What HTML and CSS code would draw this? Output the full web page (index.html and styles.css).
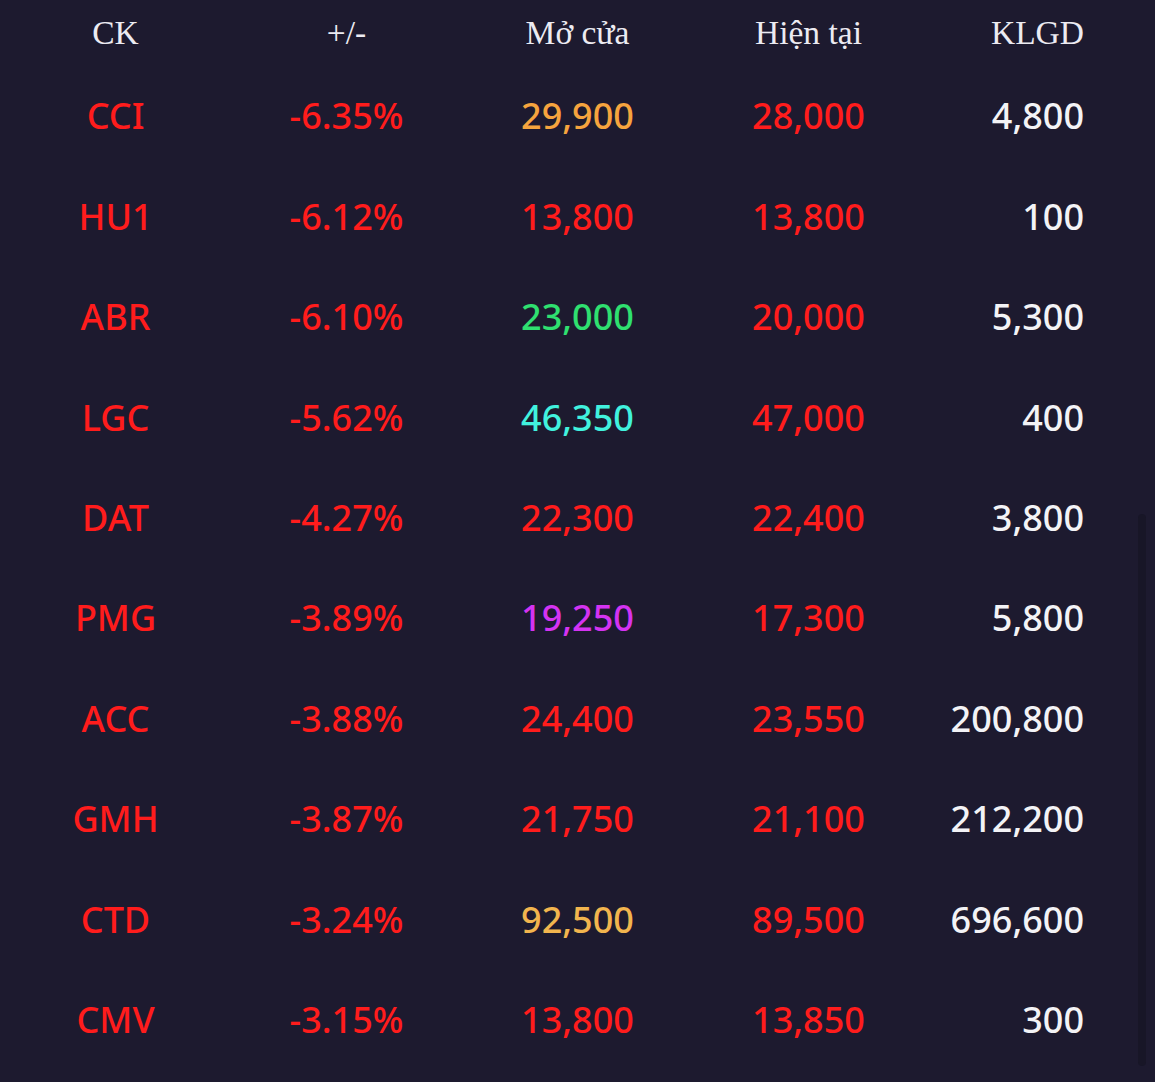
FILE: index.html
```html
<!DOCTYPE html>
<html lang="vi">
<head>
<meta charset="utf-8">
<title>Bảng giá</title>
<link rel="stylesheet" href="styles.css">
</head>
<body>
<div class="board">
  <div class="row head">
    <div class="cell">CK</div>
    <div class="cell">+/-</div>
    <div class="cell">Mở cửa</div>
    <div class="cell">Hiện tại</div>
    <div class="cell vol">KLGD</div>
  </div>
  <div class="row">
    <div class="cell red">CCI</div><div class="cell red">-6.35%</div><div class="cell ref">29,900</div><div class="cell red">28,000</div><div class="cell vol white">4,800</div>
  </div>
  <div class="row">
    <div class="cell red">HU1</div><div class="cell red">-6.12%</div><div class="cell red">13,800</div><div class="cell red">13,800</div><div class="cell vol white">100</div>
  </div>
  <div class="row">
    <div class="cell red">ABR</div><div class="cell red">-6.10%</div><div class="cell green">23,000</div><div class="cell red">20,000</div><div class="cell vol white">5,300</div>
  </div>
  <div class="row">
    <div class="cell red">LGC</div><div class="cell red">-5.62%</div><div class="cell cyan">46,350</div><div class="cell red">47,000</div><div class="cell vol white">400</div>
  </div>
  <div class="row">
    <div class="cell red">DAT</div><div class="cell red">-4.27%</div><div class="cell red">22,300</div><div class="cell red">22,400</div><div class="cell vol white">3,800</div>
  </div>
  <div class="row">
    <div class="cell red">PMG</div><div class="cell red">-3.89%</div><div class="cell purple">19,250</div><div class="cell red">17,300</div><div class="cell vol white">5,800</div>
  </div>
  <div class="row">
    <div class="cell red">ACC</div><div class="cell red">-3.88%</div><div class="cell red">24,400</div><div class="cell red">23,550</div><div class="cell vol white">200,800</div>
  </div>
  <div class="row">
    <div class="cell red">GMH</div><div class="cell red">-3.87%</div><div class="cell red">21,750</div><div class="cell red">21,100</div><div class="cell vol white">212,200</div>
  </div>
  <div class="row">
    <div class="cell red">CTD</div><div class="cell red">-3.24%</div><div class="cell ref2">92,500</div><div class="cell red">89,500</div><div class="cell vol white">696,600</div>
  </div>
  <div class="row">
    <div class="cell red">CMV</div><div class="cell red">-3.15%</div><div class="cell red">13,800</div><div class="cell red">13,850</div><div class="cell vol white">300</div>
  </div>
</div>
<div class="scroll-thumb"></div>
</body>
</html>
```
FILE: styles.css
```css
html, body {
  margin: 0;
  padding: 0;
  background: #1d1a2f;
  height: 100%;
  overflow: hidden;
}
body {
  font-family: "Noto Sans", "Open Sans", sans-serif;
}
.board {
  display: flex;
  flex-direction: column;
}
.row {
  display: grid;
  grid-template-columns: repeat(5, 1fr);
  height: 100.45px;
  align-items: center;
  font-size: 36px;
  font-weight: 500;
}
.row.head {
  height: 66px;
  font-family: "Liberation Serif", "Times New Roman", serif;
  font-size: 33.5px;
  font-weight: 400;
  color: #ecebf2;
}
.cell {
  text-align: center;
  line-height: 1;
  white-space: nowrap;
}
.cell.vol {
  text-align: right;
  padding-right: 71px;
}
.red { color: #ff1c1c; }
.white { color: #f3f3f6; }
.ref { color: #f6a43e; }
.ref2 { color: #f2b54e; }
.green { color: #2fe070; }
.cyan { color: #41f2de; }
.purple { color: #d433f2; }
.scroll-thumb {
  position: fixed;
  right: 9px;
  top: 514px;
  width: 8px;
  height: 552px;
  border-radius: 4px;
  background: #181627;
}
```
